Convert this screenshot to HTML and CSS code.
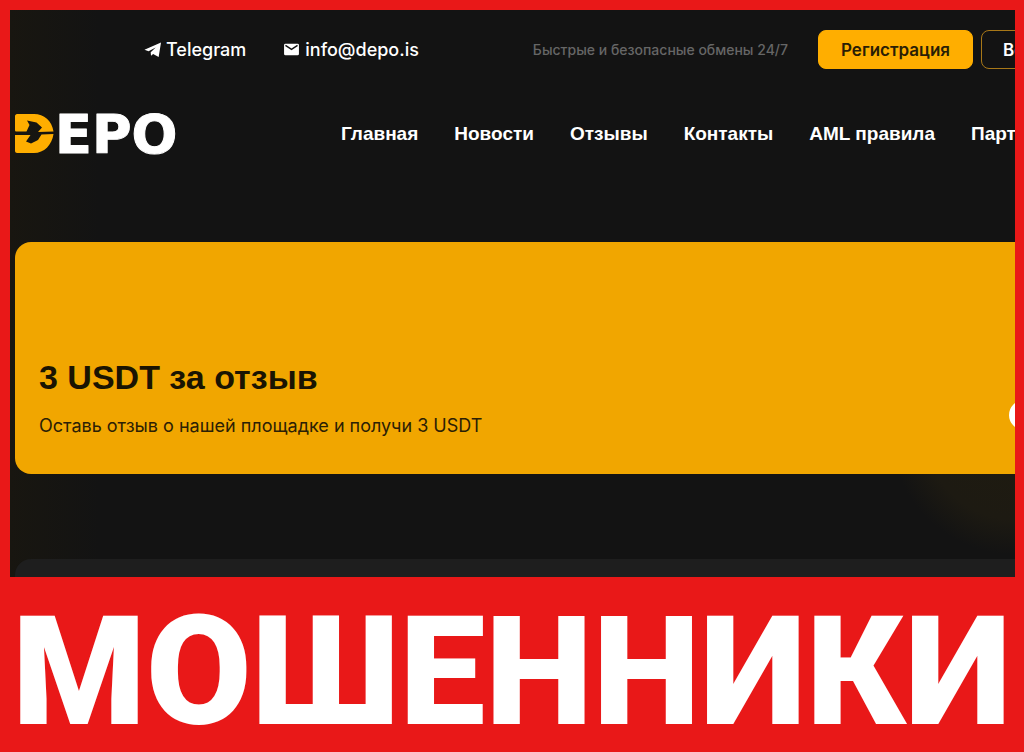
FILE: index.html
```html
<!DOCTYPE html>
<html lang="ru">
<head>
<meta charset="utf-8">
<meta name="viewport" content="width=device-width, initial-scale=1">
<title>DEPO</title>
<link rel="stylesheet" href="styles.css">
</head>
<body class="poster">
<main class="site">
  <header>
    <div class="topbar">
      <div class="contacts">
        <a class="contact" href="#"><svg class="icon" viewBox="0 0 16 16" aria-hidden="true"><path d="M.4 8.200 16 1.500 13.800 15 8.600 12.200 6.600 13.800 6.300 10.500 11 6 4.300 9.600Z"/></svg>Telegram</a>
        <a class="contact" href="#"><svg class="icon" viewBox="0 0 16 16" aria-hidden="true"><rect x="1" y="2.500" width="14" height="11" rx="1.300"/><path class="icon-fold" d="m2.300 4.200 5.700 3.600 5.700-3.600"/></svg>info@depo.is</a>
      </div>
      <p class="slogan">Быстрые и безопасные обмены 24/7</p>
      <div class="actions">
        <button class="btn btn-primary" type="button">Регистрация</button>
        <button class="btn btn-outline" type="button">Войти</button>
      </div>
    </div>
    <div class="menubar">
      <a class="logo" href="#" aria-label="DEPO">
        <svg class="logo-mark" viewBox="0 0 40 40" aria-hidden="true"><path d="M2 0h17c10 0 18 7 19.500 17.500L23 18l4-4.500-5.500-5-9.500-2 2.500 4.500-3 6.500H1.500C.5 17.500 0 17 0 16V2C0 1 1 0 2 0Z"/><path d="M0 21h15.500l-4.500 6.500 5 2 7-3.500 3.500-5.500 12-.5C37 31 29 39 19 39H2c-1 0-2-1-2-2Z"/></svg>
        <svg class="logo-word" viewBox="0 0 128 42" aria-hidden="true"><text x="0" y="40">EPO</text></svg>
      </a>
      <nav class="nav">
        <a href="#">Главная</a>
        <a href="#">Новости</a>
        <a href="#">Отзывы</a>
        <a href="#">Контакты</a>
        <a href="#">AML правила</a>
        <a href="#">Партнёрам</a>
      </nav>
    </div>
  </header>
  <section class="promo">
    <div>
      <h1>3 USDT за отзыв</h1>
      <p class="promo-text">Оставь отзыв о нашей площадке и получи 3 USDT</p>
    </div>
    <span class="promo-dot"></span>
  </section>
  <section class="panel"></section>
</main>
<footer class="verdict">МОШЕННИКИ</footer>
</body>
</html>
```
FILE: styles.css
```css
* { box-sizing: border-box; }

.poster {
  margin: 0;
  padding: 10px 9px 0 10px;
  background: #e91818;
  font-family: Inter, "Liberation Sans", sans-serif;
  overflow-x: hidden;
}

.site {
  overflow: hidden;
  padding-left: 5px;
  color: #fff;
  background:
    radial-gradient(circle at 100% 74%, #1f1b10 0, #1d1a12 90px, transparent 125px),
    linear-gradient(90deg, #181610, #131313 90px);
}

a { color: inherit; text-decoration: none; }
p, h1 { margin: 0; }

.topbar {
  display: flex;
  align-items: center;
  padding-top: 20px;
  padding-left: 129px;
  white-space: nowrap;
}

.contacts { display: flex; flex: 1; gap: 37px; }

.contact {
  display: flex;
  align-items: center;
  gap: 5px;
  font-size: 18px;
  font-weight: 500;
  line-height: 24px;
}

.icon { width: 17px; height: 17px; fill: #fff; }
.icon-fold { fill: none; stroke: #131313; stroke-width: 1.4; }

.slogan { color: #666; font-size: 14px; font-weight: 500; }

.actions { display: flex; flex: none; gap: 8px; margin: 0 -70px 0 30px; }

.btn {
  height: 39px;
  border: 1px solid #ffae00;
  border-radius: 8px;
  padding: 0 21px;
  font-family: inherit;
  font-size: 17px;
  font-weight: 600;
}

.btn-primary { width: 155px; background: #ffae00; color: #2b1e05; }
.btn-outline { width: 104px; background: transparent; border-color: #a87818; color: #fff; text-align: left; }

.menubar {
  display: flex;
  align-items: center;
  gap: 158px;
  margin-top: 44px;
}

.logo { display: flex; flex: none; }
.logo-mark { width: 40px; height: 42px; fill: #ffae00; }
.logo-word { width: 128px; height: 42px; overflow: visible; }
.logo-word text {
  font: 700 54px "DejaVu Sans", sans-serif;
  fill: #fff;
  stroke: #fff;
  stroke-width: 1px;
  stroke-linejoin: round;
}

.nav {
  display: flex;
  gap: 36px;
  white-space: nowrap;
  font-family: "Liberation Sans", Arial, sans-serif;
  font-size: 19px;
  font-weight: 700;
  line-height: 24px;
}

.promo {
  display: flex;
  align-items: flex-end;
  justify-content: space-between;
  min-height: 232px;
  margin-top: 87px;
  margin-right: -24px;
  padding: 24px 0 36px 24px;
  border-radius: 16px;
  background: #f1a600;
  color: #1a1402;
}

.promo h1 {
  font-family: "Liberation Sans", Arial, sans-serif;
  font-size: 34px;
  font-weight: 700;
  line-height: 44px;
}

.promo-text { margin-top: 15px; font-size: 18px; line-height: 24px; color: #2b2005; }

.promo-dot {
  flex: none;
  width: 30px;
  height: 30px;
  margin-bottom: 8px;
  border-radius: 50%;
  background: #fff;
}

.panel {
  min-height: 18px;
  margin-top: 85px;
  margin-right: -24px;
  border-radius: 16px 16px 0 0;
  background: #1e1e1e;
}

.verdict {
  padding: 14px 0 0 2px;
  color: #fff;
  font-family: Roboto, sans-serif;
  font-size: 153px;
  font-weight: 900;
  line-height: 161px;
  white-space: nowrap;
}
```
